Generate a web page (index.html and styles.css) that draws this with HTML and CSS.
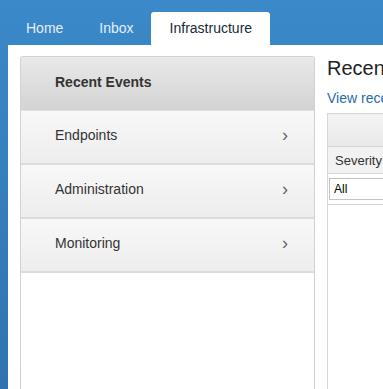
FILE: index.html
```html
<!DOCTYPE html>
<html lang="en">

<head>
    <meta charset="UTF-8">
    <meta name="viewport" content="width=device-width, initial-scale=1.0">
    <title>Infrastructure</title>
    <link rel="stylesheet" href="styles.css">
</head>

<body>
    <div class="tabs">
        <a class="tab tab-home">Home</a>
        <a class="tab tab-inbox">Inbox</a>
        <a class="tab active">Infrastructure</a>
    </div>

    <div class="panel">
        <ul class="sidebar">
            <li class="nav-item current">Recent Events</li>
            <li class="nav-item">Endpoints <span class="chevron">&rsaquo;</span></li>
            <li class="nav-item">Administration <span class="chevron">&rsaquo;</span></li>
            <li class="nav-item">Monitoring <span class="chevron">&rsaquo;</span></li>
        </ul>

        <div class="main">
            <h1>Recent Events</h1>
            <p class="subtitle">View recent events</p>
            <table class="events">
                <thead>
                    <tr class="toolbar">
                        <th colspan="3"></th>
                    </tr>
                    <tr class="columns">
                        <th>Severity</th>
                        <th>Time</th>
                        <th>Endpoint</th>
                    </tr>
                    <tr class="filters">
                        <td><select>
                                <option>All</option>
                            </select></td>
                        <td></td>
                        <td></td>
                    </tr>
                </thead>
                <tbody>
                    <tr class="empty">
                        <td colspan="3"></td>
                    </tr>
                </tbody>
            </table>
        </div>
    </div>
</body>

</html>
```

FILE: styles.css
```css
html,
body {
    height: 100%;
}

body {
    margin: 0;
    font-family: "Liberation Sans", Arial, sans-serif;
    background: linear-gradient(to bottom, #3b89c9, #2f74ae);
    color: #333;
    overflow: hidden;
}

.tabs {
    display: flex;
    align-items: flex-end;
    height: 45px;
    padding-left: 12px;
}

.tab {
    height: 33px;
    line-height: 32px;
    padding: 0 14px;
    font-size: 14px;
    color: #e3eef8;
}

.tab-inbox {
    margin-left: 8px;
    margin-right: 3px;
}

.tab.active {
    padding: 0 18px 0 19px;
    background-color: #fff;
    color: #1a2a3a;
    border-radius: 3px 3px 0 0;
}

.panel {
    display: flex;
    gap: 12px;
    height: calc(100% - 45px);
    margin-left: 8px;
    padding: 11px 0 0 12px;
    background-color: #fff;
    box-sizing: border-box;
}

.sidebar {
    flex: 0 0 295px;
    margin: 0;
    padding: 0;
    list-style: none;
    border: 1px solid #d2d2d2;
    border-bottom: none;
    border-radius: 3px 3px 0 0;
    box-sizing: border-box;
}

.nav-item {
    display: flex;
    align-items: center;
    justify-content: space-between;
    height: 52px;
    padding: 0 26px 4px 34px;
    box-sizing: border-box;
    font-size: 14px;
    color: #333;
    background: linear-gradient(to bottom, #f8f8f8, #ededed);
    border-bottom: 2px solid #dcdcdc;
}

.nav-item + .nav-item {
    height: 54px;
}

.nav-item.current {
    height: 54px;
    font-weight: bold;
    background: linear-gradient(to bottom, #e9e9e9, #d3d3d3);
    border-bottom: 1px solid #e2e2e2;
}

.chevron {
    font-size: 18px;
    color: #666;
}

.main {
    flex: 1;
    min-width: 0;
    overflow: hidden;
}

.main h1 {
    margin: 1px 0 0;
    font-size: 20px;
    font-weight: normal;
    color: #222;
    white-space: nowrap;
}

.subtitle {
    margin: 10px 0 7px;
    font-size: 14px;
    color: #2a6ca8;
    white-space: nowrap;
}

.events {
    width: 500px;
    border-collapse: collapse;
    font-size: 13px;
}

.events th,
.events td {
    border: 1px solid #d6d6d6;
    text-align: left;
    padding: 0 7px;
}

.toolbar th {
    height: 32px;
    background: linear-gradient(to bottom, #f4f4f4, #e9e9e9);
}

.columns th {
    height: 26px;
    font-weight: normal;
    color: #333;
    background-color: #f2f2f2;
}

.filters td {
    height: 26px;
    padding: 2px 1px;
}

.filters select {
    width: 100%;
    height: 22px;
    font-family: inherit;
    font-size: 12px;
    border: 1px solid #c4c4c4;
    background-color: #fff;
    appearance: none;
    padding: 0 4px;
}

.empty td {
    height: 300px;
    border-bottom: none;
}
```
